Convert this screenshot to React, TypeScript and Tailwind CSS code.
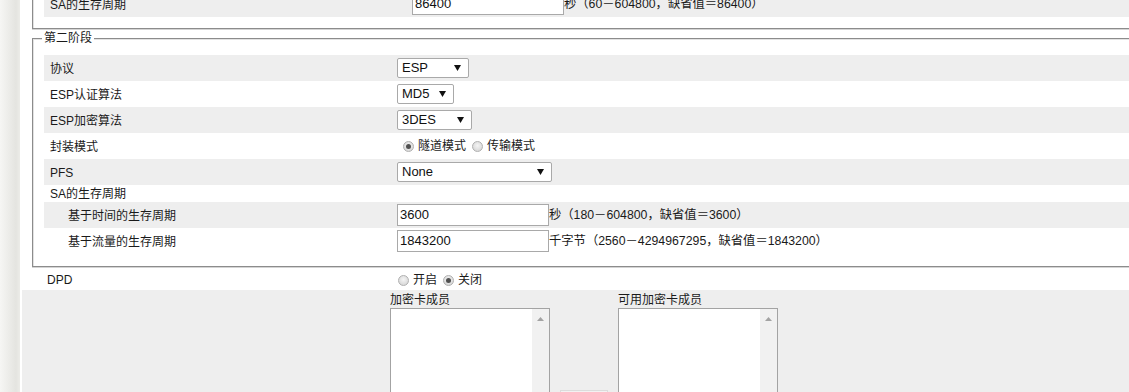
import React from "react";

const FONT = "font-['Liberation_Sans','Noto_Sans_CJK_SC',sans-serif]";

function Radio({ checked }: { checked?: boolean }) {
  return (
    <span className="inline-flex w-[13px] h-[13px] ml-[5px] mr-[3px] items-center justify-center shrink-0">
      <span className="w-[11px] h-[11px] rounded-full border border-[#b0b0b0] bg-[radial-gradient(circle_at_50%_40%,#f4f4f4,#d0d0d0)] flex items-center justify-center">
        {checked && <span className="w-[5px] h-[5px] rounded-full bg-[#505050]" />}
      </span>
    </span>
  );
}

function Select({ value, w }: { value: string; w: string }) {
  return (
    <div
      className={`${w} h-[20px] flex items-center justify-between bg-white border border-[#a9a9a9] rounded-[2px] pl-[4px] pr-[7px] text-[13px] text-[#111]`}
    >
      <span>{value}</span>
      <svg width="7" height="6" viewBox="0 0 7 6">
        <path d="M0 0 L7 0 L3.5 6 Z" fill="#111" />
      </svg>
    </div>
  );
}

function TextInput({ value }: { value: string }) {
  return (
    <div className="w-[152px] h-[22px] flex items-center bg-white border border-[#a9a9a9] pl-[2px] text-[13px] text-[#111] shrink-0">
      {value}
    </div>
  );
}

function Row({
  label,
  grey,
  indent,
  h = "h-[26px]",
  labelW = "w-[353px]",
  children,
}: {
  label: string;
  grey?: boolean;
  indent?: boolean;
  h?: string;
  labelW?: string;
  children?: React.ReactNode;
}) {
  return (
    <div className={`${h} flex items-center ${grey ? "bg-[#eeeeee]" : "bg-white"}`}>
      <div className={`${labelW} shrink-0 ${indent ? "pl-[24px]" : "pl-[6px]"} text-[12px] text-[#1a1a1a] pt-[1px]`}>
        {label}
      </div>
      <div className="flex items-center text-[12px] text-[#1a1a1a]">{children}</div>
    </div>
  );
}

function ListBox() {
  return (
    <div className="w-[160px] h-[130px] bg-white border border-[#a3a3a3] flex justify-end">
      <div className="w-[17px] h-full bg-[#f1f1f1] flex justify-center pt-[8px]">
        <svg width="7" height="4" viewBox="0 0 7 4">
          <path d="M0 4 L3.5 0 L7 4 Z" fill="#a3a3a3" />
        </svg>
      </div>
    </div>
  );
}

export default function App() {
  return (
    <div className={`h-[392px] w-full overflow-hidden bg-white ${FONT}`}>
      <div className="flex w-[1220px] h-[392px]">
        <div className="w-[20px] shrink-0 bg-[linear-gradient(to_right,#f6f6f4,#e4e4e0_80%,#ecece8)]" />
        <div className="flex-1 pl-[2px]">
          {/* First stage fieldset (cropped) */}
          <fieldset className="ml-[10px] mt-[-30px] border border-[#8c8c8c] shadow-[inset_1px_1px_0_#e2e2e2,0_1px_0_#d4d4d4] pt-[20px] pb-[11px] pl-[11px]">
            <Row label="SA的生存周期" grey labelW="w-[368px]">
              <TextInput value="86400" />
              <span className="text-[12.3px]">秒（60－604800，缺省值＝86400）</span>
            </Row>
          </fieldset>

          {/* Second stage */}
          <fieldset className="ml-[10px] mt-[1px] border border-[#8c8c8c] shadow-[inset_1px_1px_0_#e2e2e2,0_1px_0_#d4d4d4] pt-[9px] pb-[12px] pl-[11px]">
            <legend className="ml-[-2px] px-[2px] bg-white text-[12px] leading-[16px] text-[#1a1a1a]">
              第二阶段
            </legend>
            <Row label="协议" grey>
              <Select value="ESP" w="w-[72px]" />
            </Row>
            <Row label="ESP认证算法">
              <Select value="MD5" w="w-[57px]" />
            </Row>
            <Row label="ESP加密算法" grey>
              <Select value="3DES" w="w-[75px]" />
            </Row>
            <Row label="封装模式">
              <Radio checked />
              <span>隧道模式</span>
              <Radio />
              <span>传输模式</span>
            </Row>
            <Row label="PFS" grey>
              <Select value="None" w="w-[155px]" />
            </Row>
            <Row label="SA的生存周期" h="h-[17px]" />
            <Row label="基于时间的生存周期" grey indent>
              <TextInput value="3600" />
              <span className="text-[12.3px]">秒（180－604800，缺省值＝3600）</span>
            </Row>
            <Row label="基于流量的生存周期" indent>
              <TextInput value="1843200" />
              <span className="text-[12.3px]">千字节（2560－4294967295，缺省值＝1843200）</span>
            </Row>
          </fieldset>

          {/* DPD */}
          <div className="h-[23px] pt-[3px] flex items-center text-[12px] text-[#1a1a1a]">
            <div className="w-[370px] shrink-0 pl-[25px]">DPD</div>
            <Radio />
            <span>开启</span>
            <Radio checked />
            <span>关闭</span>
          </div>

          {/* Members area */}
          <div className="h-[140px] bg-[#eeeeee] flex items-start pl-[368px] pt-[3px] text-[12px] text-[#1a1a1a]">
            <div className="flex flex-col">
              <div className="leading-[15px]">加密卡成员</div>
              <ListBox />
            </div>
            <div className="w-[68px] shrink-0 flex justify-center pt-[97px]">
              <div className="w-[48px] h-[24px] border border-[#dcdcdc] bg-[#f2f2f2]" />
            </div>
            <div className="flex flex-col">
              <div className="leading-[15px]">可用加密卡成员</div>
              <ListBox />
            </div>
          </div>
        </div>
      </div>
    </div>
  );
}
